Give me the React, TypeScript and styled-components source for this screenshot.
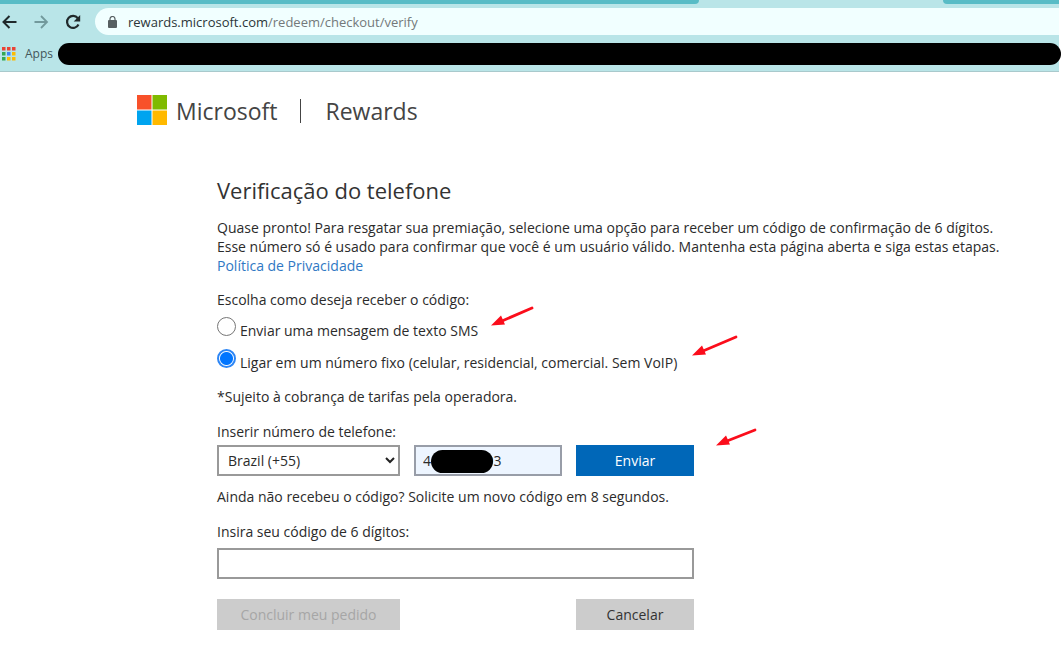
import React, { useState } from "react";
import styled, { createGlobalStyle } from "styled-components";

const GlobalStyle = createGlobalStyle`
  *, *::before, *::after { box-sizing: border-box; }
  body {
    margin: 0;
    background: #ffffff;
    color: #2b2b2b;
    font: 14px/19px "Open Sans", "Noto Sans", sans-serif;
  }
  button, input, select { font: inherit; color: inherit; }
`;

const Browser = styled.div`
  margin-right: 5px;
  background: #b9e5e8;
  border-bottom: 1px solid #a9c9cc;
`;

const TabStrip = styled.div`
  display: flex;
  justify-content: space-between;
  height: 4px;
`;

const InactiveTabs = styled.div<{ $share: number; $side: "left" | "right" }>`
  width: ${(p) => p.$share}%;
  background: #58bcc6;
  border-radius: ${(p) => (p.$side === "left" ? "0 0 6px 0" : "0 0 0 6px")};
`;

const Toolbar = styled.div`
  display: flex;
  align-items: center;
  height: 35px;
  padding-left: 1px;
`;

const NavButton = styled.button<{ $color: string }>`
  display: flex;
  width: 16px;
  height: 16px;
  margin-right: 16px;
  padding: 0;
  border: 0;
  background: none;
  color: ${(p) => p.$color};
`;

const AddressBar = styled.div`
  display: flex;
  flex: 1;
  align-items: center;
  gap: 11px;
  height: 27px;
  margin-left: -2px;
  padding-left: 13px;
  border-radius: 14px 0 0 14px;
  background: #f1ffff;
`;

const Address = styled.span`
  color: #73797a;
  font-size: 13px;
  line-height: 16px;

  b { color: #2c3638; font-weight: 400; }
`;

const Bookmarks = styled.div`
  display: flex;
  align-items: center;
  height: 32px;
  padding: 0 0 3px 2px;
`;

const AppsButton = styled.button`
  display: flex;
  align-items: center;
  gap: 9px;
  padding: 0;
  border: 0;
  background: none;
  color: #44575a;
  font-size: 12px;
  line-height: 16px;
`;

const BookmarkRedaction = styled.div`
  flex: 1;
  height: 22px;
  margin: 0 -2px 0 5px;
  border-radius: 11px;
  background: #000000;
`;

const Brand = styled.header`
  display: flex;
  align-items: center;
  height: 34px;
  margin: 21px 0 0 137px;
  color: #444444;
  font-size: 23px;
  line-height: 34px;
`;

const BrandName = styled.span`
  padding-top: 2px;
`;

const BrandDivider = styled.i`
  width: 1px;
  height: 24px;
  margin: 2px 24px 0 23px;
  background: #444444;
`;

const Logo = styled.svg`
  margin-right: 9px;
`;

const Content = styled.main`
  position: relative;
  margin-top: 47px;
  padding: 0 16px 16px 217px;
`;

const Title = styled.h1`
  margin: 0;
  color: #333333;
  font-size: 22px;
  font-weight: 400;
  line-height: 32px;
`;

const Text = styled.p<{ $top: number }>`
  margin: ${(p) => p.$top}px 0 0;
`;

const PolicyLink = styled.a`
  color: #2f78c4;
  text-decoration: none;
`;

const Form = styled.form`
  width: 477px;
  max-width: 100%;
`;

const Choices = styled.fieldset`
  margin: 15px 0 0;
  padding: 0;
  border: 0;

  legend { padding: 0; }
`;

const Choice = styled.label`
  display: flex;
  gap: 4px;
  height: 24px;
  margin-top: 8px;
  white-space: nowrap;

  span { padding-top: 4px; }
`;

const Radio = styled.input`
  appearance: none;
  flex: none;
  width: 19px;
  height: 19px;
  margin: 0;
  border: 1px solid #767676;
  border-radius: 50%;
  background: #ffffff;

  &:checked {
    border: 2px solid #2d86f5;
    background: radial-gradient(circle, #0075ff 6px, #ffffff 7px);
  }
`;

const FieldLabel = styled.label<{ $top: number; $bottom: number }>`
  display: block;
  margin: ${(p) => p.$top}px 0 ${(p) => p.$bottom}px;
`;

const Row = styled.div`
  display: grid;
  grid-template-columns: 183px 148px 118px;
  gap: 14px;
`;

const SelectWrap = styled.div`
  display: grid;
  align-items: center;

  > * { grid-area: 1 / 1; }
  svg { justify-self: end; margin-right: 5px; pointer-events: none; }
`;

const Select = styled.select`
  appearance: none;
  width: 100%;
  height: 31px;
  padding: 0 9px;
  border: 2px solid #999999;
  border-radius: 0;
  background: #ffffff;
`;

const PhoneWrap = styled.div`
  position: relative;
`;

const Input = styled.input<{ $fill?: string }>`
  display: block;
  width: 100%;
  height: 31px;
  padding: 0 7px;
  border: 2px solid ${(p) => (p.$fill ? "#989da8" : "#999999")};
  border-radius: 0;
  background: ${(p) => p.$fill ?? "#ffffff"};
`;

const PhoneRedaction = styled.i`
  position: absolute;
  top: 5px;
  left: 17px;
  width: 62px;
  height: 23px;
  border-radius: 12px;
  background: #000000;
`;

const Button = styled.button<{ $primary?: boolean }>`
  grid-column: ${(p) => (p.type === "button" ? "3" : "auto")};
  height: 31px;
  padding: 0;
  border: 0;
  background: ${(p) => (p.$primary ? "#0067b8" : "#cccccc")};
  color: ${(p) => (p.$primary ? "#ffffff" : "#333333")};

  &:disabled { color: #a6a6a6; }
`;

const Actions = styled(Row)`
  margin-top: 20px;
`;

const Arrow = styled.svg<{ $x: number; $y: number }>`
  position: absolute;
  left: ${(p) => p.$x}px;
  top: ${(p) => p.$y}px;
  pointer-events: none;
`;

function PointerArrow({ x, y, dx, dy }: { x: number; y: number; dx: number; dy: number }) {
  return (
    <Arrow $x={x} $y={y} width="50" height="26" viewBox="0 0 50 26" aria-hidden="true">
      <path d={`M11 18L${dx} ${21 - dy}`} stroke="#fb0d1b" strokeWidth="2.800" strokeLinecap="round" fill="none" />
      <path d="M0 22.500L10 12.500L14 21.500Z" fill="#fb0d1b" />
    </Arrow>
  );
}

const appColors = ["#ea4335", "#ea4335", "#ea4335", "#34a853", "#4285f4", "#fbbc05", "#34a853", "#fbbc05", "#fbbc05"];

export default function App() {
  const [method, setMethod] = useState("call");
  const [code, setCode] = useState("");

  return (
    <>
      <GlobalStyle />
      <Browser>
        <TabStrip>
          <InactiveTabs $share={66} $side="left" />
          <InactiveTabs $share={11} $side="right" />
        </TabStrip>
        <Toolbar>
          <NavButton $color="#20292b" aria-label="Voltar">
            <svg width="16" height="16" viewBox="0 0 16 16" fill="none" stroke="currentColor" strokeWidth="2">
              <path d="M15.500 8H3M8.500 2L2.500 8l6 6" />
            </svg>
          </NavButton>
          <NavButton $color="#72999c" aria-label="Avançar">
            <svg width="16" height="16" viewBox="0 0 16 16" fill="none" stroke="currentColor" strokeWidth="1.800">
              <path d="M1.500 8h12M8 2l6 6-6 6" />
            </svg>
          </NavButton>
          <NavButton $color="#20292b" aria-label="Recarregar">
            <svg width="16" height="16" viewBox="0 0 16 16" fill="none" stroke="currentColor" strokeWidth="2.200">
              <path d="M13.500 10.500A6 6 0 1 1 12.800 4.200" />
              <path d="M15.200 1v6.500H8.700z" fill="currentColor" stroke="none" />
            </svg>
          </NavButton>
          <AddressBar>
            <svg width="9" height="12" viewBox="0 0 9 12" aria-hidden="true">
              <rect x="0" y="4" width="9" height="8" rx="1" fill="#575f61" />
              <path d="M2 5V3a2.500 2.500 0 0 1 5 0v2" fill="none" stroke="#575f61" strokeWidth="1.200" />
            </svg>
            <Address><b>rewards.microsoft.com</b>/redeem/checkout/verify</Address>
          </AddressBar>
        </Toolbar>
        <Bookmarks>
          <AppsButton>
            <svg width="14" height="14" viewBox="0 0 14 14" aria-hidden="true">
              {appColors.map((color, i) => (
                <rect key={i} x={(i % 3) * 5} y={Math.floor(i / 3) * 5} width="3.500" height="3.500" fill={color} />
              ))}
            </svg>
            Apps
          </AppsButton>
          <BookmarkRedaction />
        </Bookmarks>
      </Browser>

      <Brand>
        <Logo width="30" height="30" viewBox="0 0 30 30" aria-hidden="true">
          <path fill="#f8512a" d="M0 0h14.500v14.500H0z" />
          <path fill="#7fba00" d="M15.500 0H30v14.500H15.500z" />
          <path fill="#00a4ef" d="M0 15.500h14.500V30H0z" />
          <path fill="#ffb900" d="M15.500 15.500H30V30H15.500z" />
        </Logo>
        <BrandName>Microsoft</BrandName>
        <BrandDivider />
        <BrandName>Rewards</BrandName>
      </Brand>

      <Content>
        <Title>Verificação do telefone</Title>
        <Text $top={12}>
          Quase pronto! Para resgatar sua premiação, selecione uma opção para receber um código de confirmação de 6 dígitos.
          <br />
          Esse número só é usado para confirmar que você é um usuário válido. Mantenha esta página aberta e siga estas etapas.
          <br />
          <PolicyLink href="#privacidade">Política de Privacidade</PolicyLink>
        </Text>
        <Form onSubmit={(e) => e.preventDefault()}>
          <Choices>
            <legend>Escolha como deseja receber o código:</legend>
            <Choice>
              <Radio type="radio" name="method" checked={method === "sms"} onChange={() => setMethod("sms")} />
              <span>Enviar uma mensagem de texto SMS</span>
            </Choice>
            <Choice>
              <Radio type="radio" name="method" checked={method === "call"} onChange={() => setMethod("call")} />
              <span>Ligar em um número fixo (celular, residencial, comercial. Sem VoIP)</span>
            </Choice>
          </Choices>
          <Text $top={14}>*Sujeito à cobrança de tarifas pela operadora.</Text>
          <FieldLabel $top={16} $bottom={4} htmlFor="phone">Inserir número de telefone:</FieldLabel>
          <Row>
            <SelectWrap>
              <Select aria-label="País">
                <option>Brazil (+55)</option>
              </Select>
              <svg width="10" height="7" viewBox="0 0 10 7" fill="none" stroke="#222222" strokeWidth="2" aria-hidden="true">
                <path d="M1 1l4 4 4-4" />
              </svg>
            </SelectWrap>
            <PhoneWrap>
              <Input id="phone" type="tel" $fill="#edf5ff" defaultValue="4               93" />
              <PhoneRedaction />
            </PhoneWrap>
            <Button type="submit" $primary>Enviar</Button>
          </Row>
          <Text $top={11}>Ainda não recebeu o código? Solicite um novo código em 8 segundos.</Text>
          <FieldLabel $top={16} $bottom={7} htmlFor="code">Insira seu código de 6 dígitos:</FieldLabel>
          <Input id="code" value={code} onChange={(e) => setCode(e.target.value)} />
          <Actions>
            <Button type="submit" disabled>Concluir meu pedido</Button>
            <Button type="button">Cancelar</Button>
          </Actions>
        </Form>
        <PointerArrow x={491} y={129} dx={41} dy={16} />
        <PointerArrow x={692} y={159} dx={44} dy={17} />
        <PointerArrow x={716} y={249} dx={39} dy={14} />
      </Content>
    </>
  );
}
